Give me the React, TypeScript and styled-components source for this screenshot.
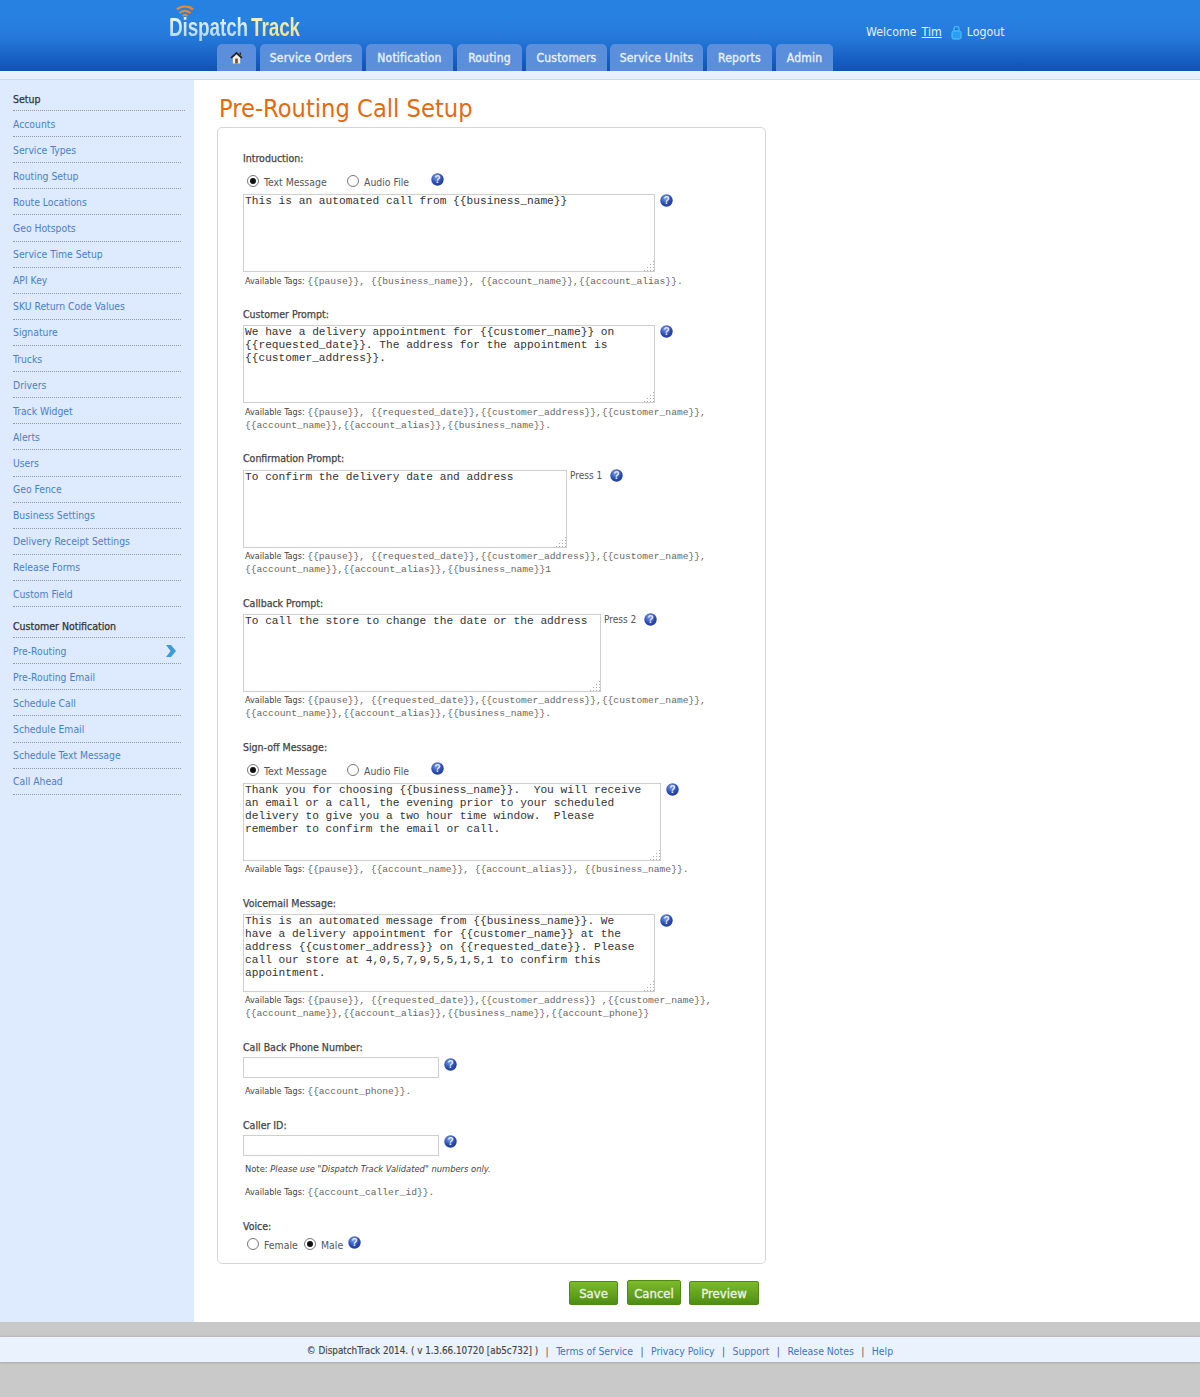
import React from "react";
import styled, { createGlobalStyle } from "styled-components";

const Global = createGlobalStyle`
  html, body { margin: 0; padding: 0; background: #c9c9c9; }
  body { font-family: "DejaVu Sans", Tahoma, sans-serif; font-stretch: condensed; color: #333; }
  * { box-sizing: border-box; }
`;

const Page = styled.div`
  width: 1200px;
  height: 1397px;
  display: flex;
  flex-direction: column;
  background: #c9c9c9;
`;
const Header = styled.header`
  height: 71px;
  background: linear-gradient(#2781e1 0, #2781e1 28%, #2477d8 55%, #0f52b6 100%);
  display: flex;
  flex-direction: column;
`;
const TopRow = styled.div`
  height: 44px;
  display: flex;
  padding-left: 169px;
`;
const Logo = styled.div`
  width: 697px;
  position: relative;
  padding-top: 13px;
`;
const LogoWord = styled.div`
  display: inline-flex;
  transform: scaleX(0.76);
  transform-origin: left top;
  font-family: "Liberation Sans", sans-serif;
  font-stretch: normal;
  font-weight: 700;
  font-size: 25px;
  line-height: 29px;
  letter-spacing: -0.2px;
`;
const LogoPart = styled.span<{ $track?: boolean }>`
  display: inline-block;
  margin-left: ${(p) => (p.$track ? "4px" : "0")};
  background: ${(p) =>
    p.$track ? "linear-gradient(#f7f4d0, #f0dc78)" : "linear-gradient(#f4fafe, #a9d3ef)"};
  -webkit-background-clip: text;
  background-clip: text;
  color: transparent;
`;
const LogoWaves = styled.svg`
  position: absolute;
  left: 7px;
  top: 5px;
`;
const Welcome = styled.div`
  display: flex;
  align-items: center;
  gap: 5px;
  height: 24px;
  margin-top: 20px;
  font-size: 12.3px;
  color: #e4f0fd;
`;
const UserLink = styled.a`
  color: #e4f0fd;
  text-decoration: underline;
  margin: 0 4px 0 0;
`;
const Tabs = styled.nav`
  height: 27px;
  display: flex;
  padding-left: 217px;
`;
const Tab = styled.a<{ $w: number; $ml: number }>`
  width: ${(p) => p.$w}px;
  margin-left: ${(p) => p.$ml}px;
  height: 27px;
  background: #5b8fdb;
  border-radius: 5px 5px 0 0;
  display: flex;
  align-items: center;
  justify-content: center;
  color: #e9f2fc;
  font-size: 12px;
  letter-spacing: 0.2px;
  -webkit-text-stroke: 0.35px #e9f2fc;
  white-space: nowrap;
`;
const Band = styled.div`
  height: 9px;
  background: #e8f1fd;
  border-bottom: 1px solid #c5dcf3;
`;
const Body = styled.div`
  height: 1242px;
  display: flex;
  background: #fff;
`;
const Side = styled.aside`
  width: 194px;
  background: #deeafe;
  padding: 12px 0 0 13px;
`;
const SideHead = styled.div<{ $mt?: number }>`
  width: 172px;
  height: 19px;
  margin-top: ${(p) => p.$mt ?? 0}px;
  border-bottom: 1px dotted #9a9a9a;
  font-size: 10.5px;
  -webkit-text-stroke: 0.25px #333;
  color: #333;
  line-height: 15px;
`;
const SideItem = styled.a`
  width: 168px;
  height: 26.12px;
  border-bottom: 1px dotted #8f9aa8;
  font-size: 10.3px;
  color: #4a7fc4;
  display: flex;
  align-items: center;
  justify-content: space-between;
  padding-right: 5px;
`;
const Main = styled.main`
  width: 549px;
  margin-left: 23px;
  display: flex;
  flex-direction: column;
`;
const Title = styled.h1`
  margin: 14px 0 0 2px;
  height: 33px;
  font-size: 25.2px;
  line-height: 30px;
  font-weight: 400;
  color: #e56a0f;
  white-space: nowrap;
`;
const Card = styled.div`
  height: 1137px;
  border: 1px solid #d6d6d6;
  border-radius: 5px;
  padding: 23px 0 0 25px;
`;
const Section = styled.section<{ $gap: number }>`
  margin-top: ${(p) => p.$gap}px;
`;
const Label = styled.div`
  font-size: 10.5px;
  line-height: 14px;
  -webkit-text-stroke: 0.25px #444;
  color: #444;
`;
const RadioRow = styled.div<{ $mt?: number }>`
  display: flex;
  align-items: center;
  height: 16px;
  margin-top: ${(p) => p.$mt ?? 8}px;
  padding-left: 4px;
  font-size: 10.4px;
  color: #555;
`;
const Radio = styled.input.attrs({ type: "radio" })`
  appearance: none;
  width: 12px;
  height: 12px;
  margin: -1px 5px 0 0;
  border: 1px solid #777;
  border-radius: 50%;
  background: #fff;
  position: relative;
  flex: none;
  &:checked::after {
    content: "";
    position: absolute;
    left: 2px;
    top: 2px;
    width: 6px;
    height: 6px;
    border-radius: 50%;
    background: #111;
  }
`;
const RadioText = styled.span<{ $w?: number }>`
  width: ${(p) => (p.$w ? `${p.$w}px` : "auto")};
  margin-top: 2px;
  white-space: nowrap;
`;
const FieldRow = styled.div<{ $mt?: number }>`
  display: flex;
  align-items: flex-start;
  margin-top: ${(p) => p.$mt ?? 4}px;
`;
const AreaWrap = styled.div<{ $w: number }>`
  position: relative;
  width: ${(p) => p.$w}px;
  height: 78px;
  flex: none;
  &::after {
    content: "";
    position: absolute;
    right: 1px;
    bottom: 1px;
    width: 11px;
    height: 11px;
    background: radial-gradient(circle, #aaa 0 1px, transparent 1px) 0 0 / 3px 3px;
    clip-path: polygon(100% 0, 100% 100%, 0 100%);
  }
`;
const Area = styled.textarea`
  display: block;
  width: 100%;
  height: 100%;
  margin: 0;
  padding: 0 1px;
  border: 1px solid #cfcfcf;
  border-radius: 0;
  background: #fff;
  font-family: "Liberation Mono", monospace;
  font-stretch: normal;
  font-size: 11.2px;
  line-height: 13px;
  color: #333;
  outline: none;
  overflow: hidden;
  resize: none;
  white-space: pre;
`;
const TextBox = styled.input`
  display: block;
  width: 196px;
  height: 21px;
  margin: 0;
  border: 1px solid #cfcfcf;
  background: #fff;
  outline: none;
`;
const HelpWrap = styled.span<{ $ml?: number; $mt?: number }>`
  display: inline-flex;
  flex: none;
  margin-left: ${(p) => p.$ml ?? 5}px;
  margin-top: ${(p) => p.$mt ?? 0}px;
`;
const Press = styled.span`
  margin: -1px 0 0 3px;
  font-size: 10px;
  line-height: 13px;
  color: #555;
  white-space: nowrap;
`;
const Tags = styled.div<{ $mt?: number }>`
  margin-top: ${(p) => p.$mt ?? 2}px;
  padding-left: 2px;
  width: 490px;
  font-size: 9px;
  line-height: 13px;
  color: #444;
  white-space: nowrap;
`;
const TagCode = styled.span`
  font-family: "Liberation Mono", monospace;
  font-stretch: normal;
  font-size: 9.65px;
  color: #666;
`;
const Note = styled.div`
  margin-top: 6px;
  padding-left: 2px;
  font-size: 9.3px;
  line-height: 13px;
  color: #444;
  white-space: nowrap;
`;
const NoteEm = styled.em`
  font-style: italic;
`;
const Actions = styled.div`
  display: flex;
  justify-content: flex-end;
  align-items: flex-end;
  padding: 16px 7px 0 0;
  height: 41px;
`;
const Btn = styled.button<{ $w: number; $h: number; $ml: number }>`
  width: ${(p) => p.$w}px;
  height: ${(p) => p.$h}px;
  margin: 0 0 0 ${(p) => p.$ml}px;
  padding: 1px 0 0;
  border: 1px solid #4c8a12;
  border-radius: 2px;
  background: linear-gradient(#7dba2b, #4f8e14);
  color: #eef6e2;
  font-family: inherit;
  font-stretch: condensed;
  font-size: 13px;
  -webkit-text-stroke: 0.3px #eef6e2;
`;
const Foot = styled.footer`
  margin-top: 15px;
  height: 25px;
  background: #eaf3fd;
  box-shadow: 0 1px 2px rgba(0, 0, 0, 0.15), 0 -1px 2px rgba(0, 0, 0, 0.08);
  display: flex;
  align-items: center;
  justify-content: center;
  padding-top: 2px;
  font-size: 10.4px;
  color: #444;
  white-space: pre;
`;
const FootCopy = styled.span`
  font-size: 9.8px;
  -webkit-text-stroke: 0.15px #444;
`;
const FootLink = styled.a`
  color: #3f74bd;
`;
const FootSep = styled.span`
  margin: 0 7.4px;
  color: #555;
`;

const Help = () => (
  <svg width="13" height="13" viewBox="0 0 13 13">
    <defs>
      <radialGradient id="helpG" cx="40%" cy="30%" r="75%">
        <stop offset="0" stopColor="#7f9be0" />
        <stop offset="0.6" stopColor="#2c4fb4" />
        <stop offset="1" stopColor="#1f3a92" />
      </radialGradient>
    </defs>
    <circle cx="6.5" cy="6.5" r="6.2" fill="url(#helpG)" />
    <text x="6.5" y="10" textAnchor="middle" fontSize="10" fontWeight="700" fontFamily="Liberation Sans" fill="#e8f0ff">?</text>
  </svg>
);

const Home = () => (
  <svg width="13" height="13" viewBox="0 0 13 13">
    <path d="M6.5 .8 L12.6 6.6 L11.2 7.4 L6.5 3 L1.8 7.4 L.4 6.6 Z" fill="#2b1e12" />
    <path d="M2.8 6.8 L6.5 3.4 L10.2 6.8 V12.4 H2.8 Z" fill="#f4efe2" />
    <rect x="5.2" y="7.6" width="2.6" height="4.8" fill="#7d4a20" />
    <path d="M9.6 1.4 H11 V4.2 L9.6 3 Z" fill="#2b1e12" />
  </svg>
);

const Lock = () => (
  <svg width="11" height="15" viewBox="0 0 11 15">
    <path d="M3 6 V3.6 C3 .6 8 .6 8 3.6 V6" fill="none" stroke="#45b8fb" strokeWidth="1.3" />
    <rect x="1" y="6" width="9" height="8" rx="1.6" fill="#2c9df2" stroke="#52c6fd" strokeWidth="1" />
  </svg>
);

const Chevron = () => (
  <svg width="10" height="12" viewBox="0 0 10 12">
    <path d="M0 0 H5 L10 6 L5 12 H0 L4.6 6 Z" fill="#3f9bd8" />
  </svg>
);

const tabs: [string, number, number][] = [
  ["Service Orders", 102, 4],
  ["Notification", 87, 4],
  ["Routing", 65, 4],
  ["Customers", 81, 4],
  ["Service Units", 93, 3],
  ["Reports", 65, 4],
  ["Admin", 57, 4],
];
const setup = [
  "Accounts", "Service Types", "Routing Setup", "Route Locations", "Geo Hotspots", "Service Time Setup",
  "API Key", "SKU Return Code Values", "Signature", "Trucks", "Drivers", "Track Widget", "Alerts", "Users",
  "Geo Fence", "Business Settings", "Delivery Receipt Settings", "Release Forms", "Custom Field",
];
const notify = ["Pre-Routing", "Pre-Routing Email", "Schedule Call", "Schedule Email", "Schedule Text Message", "Call Ahead"];

const TagList = ({ lines, mt }: { lines: string[]; mt?: number }) => (
  <>
    <Tags $mt={mt}>Available Tags: <TagCode>{lines[0]}</TagCode></Tags>
    {lines[1] && <Tags $mt={0}><TagCode>{lines[1]}</TagCode></Tags>}
  </>
);

const AudioRadios = ({ name }: { name: string }) => (
  <RadioRow>
    <Radio defaultChecked name={name} />
    <RadioText $w={83}>Text Message</RadioText>
    <Radio name={name} />
    <RadioText $w={50}>Audio File</RadioText>
    <HelpWrap $ml={17} $mt={-4}><Help /></HelpWrap>
  </RadioRow>
);

const fullTags = "{{pause}}, {{requested_date}},{{customer_address}},{{customer_name}},";

export default function App() {
  return (
    <Page>
      <Global />
      <Header>
        <TopRow>
          <Logo>
            <LogoWaves width="18" height="13" viewBox="0 0 18 13">
              <path d="M1 4.5 C5 .5 13 .5 17 4.5" fill="none" stroke="#ee8a2b" strokeWidth="2.2" />
              <path d="M3.5 8 C6.5 5.2 11.5 5.2 14.5 8" fill="none" stroke="#ee8a2b" strokeWidth="2" />
              <path d="M6.5 11 C8 9.8 10 9.8 11.5 11" fill="none" stroke="#ee8a2b" strokeWidth="1.8" />
            </LogoWaves>
            <LogoWord>
              <LogoPart>Dispatch</LogoPart>
              <LogoPart $track>Track</LogoPart>
            </LogoWord>
          </Logo>
          <Welcome>
            <span>Welcome</span>
            <UserLink>Tim</UserLink>
            <Lock />
            <span>Logout</span>
          </Welcome>
        </TopRow>
        <Tabs>
          <Tab $w={39} $ml={0}><Home /></Tab>
          {tabs.map(([t, w, m]) => (
            <Tab key={t} $w={w} $ml={m}>{t}</Tab>
          ))}
        </Tabs>
      </Header>
      <Band />
      <Body>
        <Side>
          <SideHead>Setup</SideHead>
          {setup.map((s) => <SideItem key={s}>{s}</SideItem>)}
          <SideHead $mt={12}>Customer Notification</SideHead>
          {notify.map((s, i) => (
            <SideItem key={s}>{s}{i === 0 && <Chevron />}</SideItem>
          ))}
        </Side>
        <Main>
          <Title>Pre-Routing Call Setup</Title>
          <Card>
            <Section $gap={0}>
              <Label>Introduction:</Label>
              <AudioRadios name="a" />
              <FieldRow $mt={5}>
                <AreaWrap $w={412}><Area readOnly defaultValue="This is an automated call from {{business_name}}" /></AreaWrap>
                <HelpWrap><Help /></HelpWrap>
              </FieldRow>
              <TagList mt={3} lines={["{{pause}}, {{business_name}}, {{account_name}},{{account_alias}}."]} />
            </Section>
            <Section $gap={19}>
              <Label>Customer Prompt:</Label>
              <FieldRow>
                <AreaWrap $w={412}><Area readOnly defaultValue={"We have a delivery appointment for {{customer_name}} on\n{{requested_date}}. The address for the appointment is\n{{customer_address}}."} /></AreaWrap>
                <HelpWrap><Help /></HelpWrap>
              </FieldRow>
              <TagList mt={3} lines={[fullTags, "{{account_name}},{{account_alias}},{{business_name}}."]} />
            </Section>
            <Section $gap={19}>
              <Label>Confirmation Prompt:</Label>
              <FieldRow $mt={5}>
                <AreaWrap $w={324}><Area readOnly defaultValue="To confirm the delivery date and address" /></AreaWrap>
                <Press>Press 1</Press>
                <HelpWrap $ml={8} $mt={-1}><Help /></HelpWrap>
              </FieldRow>
              <TagList lines={[fullTags, "{{account_name}},{{account_alias}},{{business_name}}1"]} />
            </Section>
            <Section $gap={20}>
              <Label>Callback Prompt:</Label>
              <FieldRow>
                <AreaWrap $w={358}><Area readOnly defaultValue="To call the store to change the date or the address" /></AreaWrap>
                <Press>Press 2</Press>
                <HelpWrap $ml={8} $mt={-1}><Help /></HelpWrap>
              </FieldRow>
              <TagList lines={[fullTags, "{{account_name}},{{account_alias}},{{business_name}}."]} />
            </Section>
            <Section $gap={20}>
              <Label>Sign-off Message:</Label>
              <AudioRadios name="b" />
              <FieldRow $mt={5}>
                <AreaWrap $w={418}><Area readOnly defaultValue={"Thank you for choosing {{business_name}}.  You will receive\nan email or a call, the evening prior to your scheduled\ndelivery to give you a two hour time window.  Please\nremember to confirm the email or call."} /></AreaWrap>
                <HelpWrap><Help /></HelpWrap>
              </FieldRow>
              <TagList lines={["{{pause}}, {{account_name}}, {{account_alias}}, {{business_name}}."]} />
            </Section>
            <Section $gap={20}>
              <Label>Voicemail Message:</Label>
              <FieldRow>
                <AreaWrap $w={412}><Area readOnly defaultValue={"This is an automated message from {{business_name}}. We\nhave a delivery appointment for {{customer_name}} at the\naddress {{customer_address}} on {{requested_date}}. Please\ncall our store at 4,0,5,7,9,5,5,1,5,1 to confirm this\nappointment."} /></AreaWrap>
                <HelpWrap><Help /></HelpWrap>
              </FieldRow>
              <TagList lines={["{{pause}}, {{requested_date}},{{customer_address}} ,{{customer_name}},", "{{account_name}},{{account_alias}},{{business_name}},{{account_phone}}"]} />
            </Section>
            <Section $gap={20}>
              <Label>Call Back Phone Number:</Label>
              <FieldRow $mt={3}>
                <TextBox readOnly />
                <HelpWrap $mt={1}><Help /></HelpWrap>
              </FieldRow>
              <TagList mt={7} lines={["{{account_phone}}."]} />
            </Section>
            <Section $gap={20}>
              <Label>Caller ID:</Label>
              <FieldRow $mt={3}>
                <TextBox readOnly />
                <HelpWrap><Help /></HelpWrap>
              </FieldRow>
              <Note>Note: <NoteEm>Please use "Dispatch Track Validated" numbers only.</NoteEm></Note>
              <TagList mt={11} lines={["{{account_caller_id}}."]} />
            </Section>
            <Section $gap={20}>
              <Label>Voice:</Label>
              <RadioRow $mt={3}>
                <Radio name="v" />
                <RadioText $w={40}>Female</RadioText>
                <Radio defaultChecked name="v" />
                <RadioText>Male</RadioText>
                <HelpWrap $ml={5} $mt={-3}><Help /></HelpWrap>
              </RadioRow>
            </Section>
          </Card>
          <Actions>
            <Btn $w={49} $h={24} $ml={0}>Save</Btn>
            <Btn $w={54} $h={25} $ml={9}>Cancel</Btn>
            <Btn $w={70} $h={24} $ml={8}>Preview</Btn>
          </Actions>
        </Main>
      </Body>
      <Foot>
        <FootCopy>© DispatchTrack 2014. ( v 1.3.66.10720 [ab5c732] )</FootCopy>
        <FootSep>|</FootSep>
        <FootLink>Terms of Service</FootLink>
        <FootSep>|</FootSep>
        <FootLink>Privacy Policy</FootLink>
        <FootSep>|</FootSep>
        <FootLink>Support</FootLink>
        <FootSep>|</FootSep>
        <FootLink>Release Notes</FootLink>
        <FootSep>|</FootSep>
        <FootLink>Help</FootLink>
      </Foot>
    </Page>
  );
}
